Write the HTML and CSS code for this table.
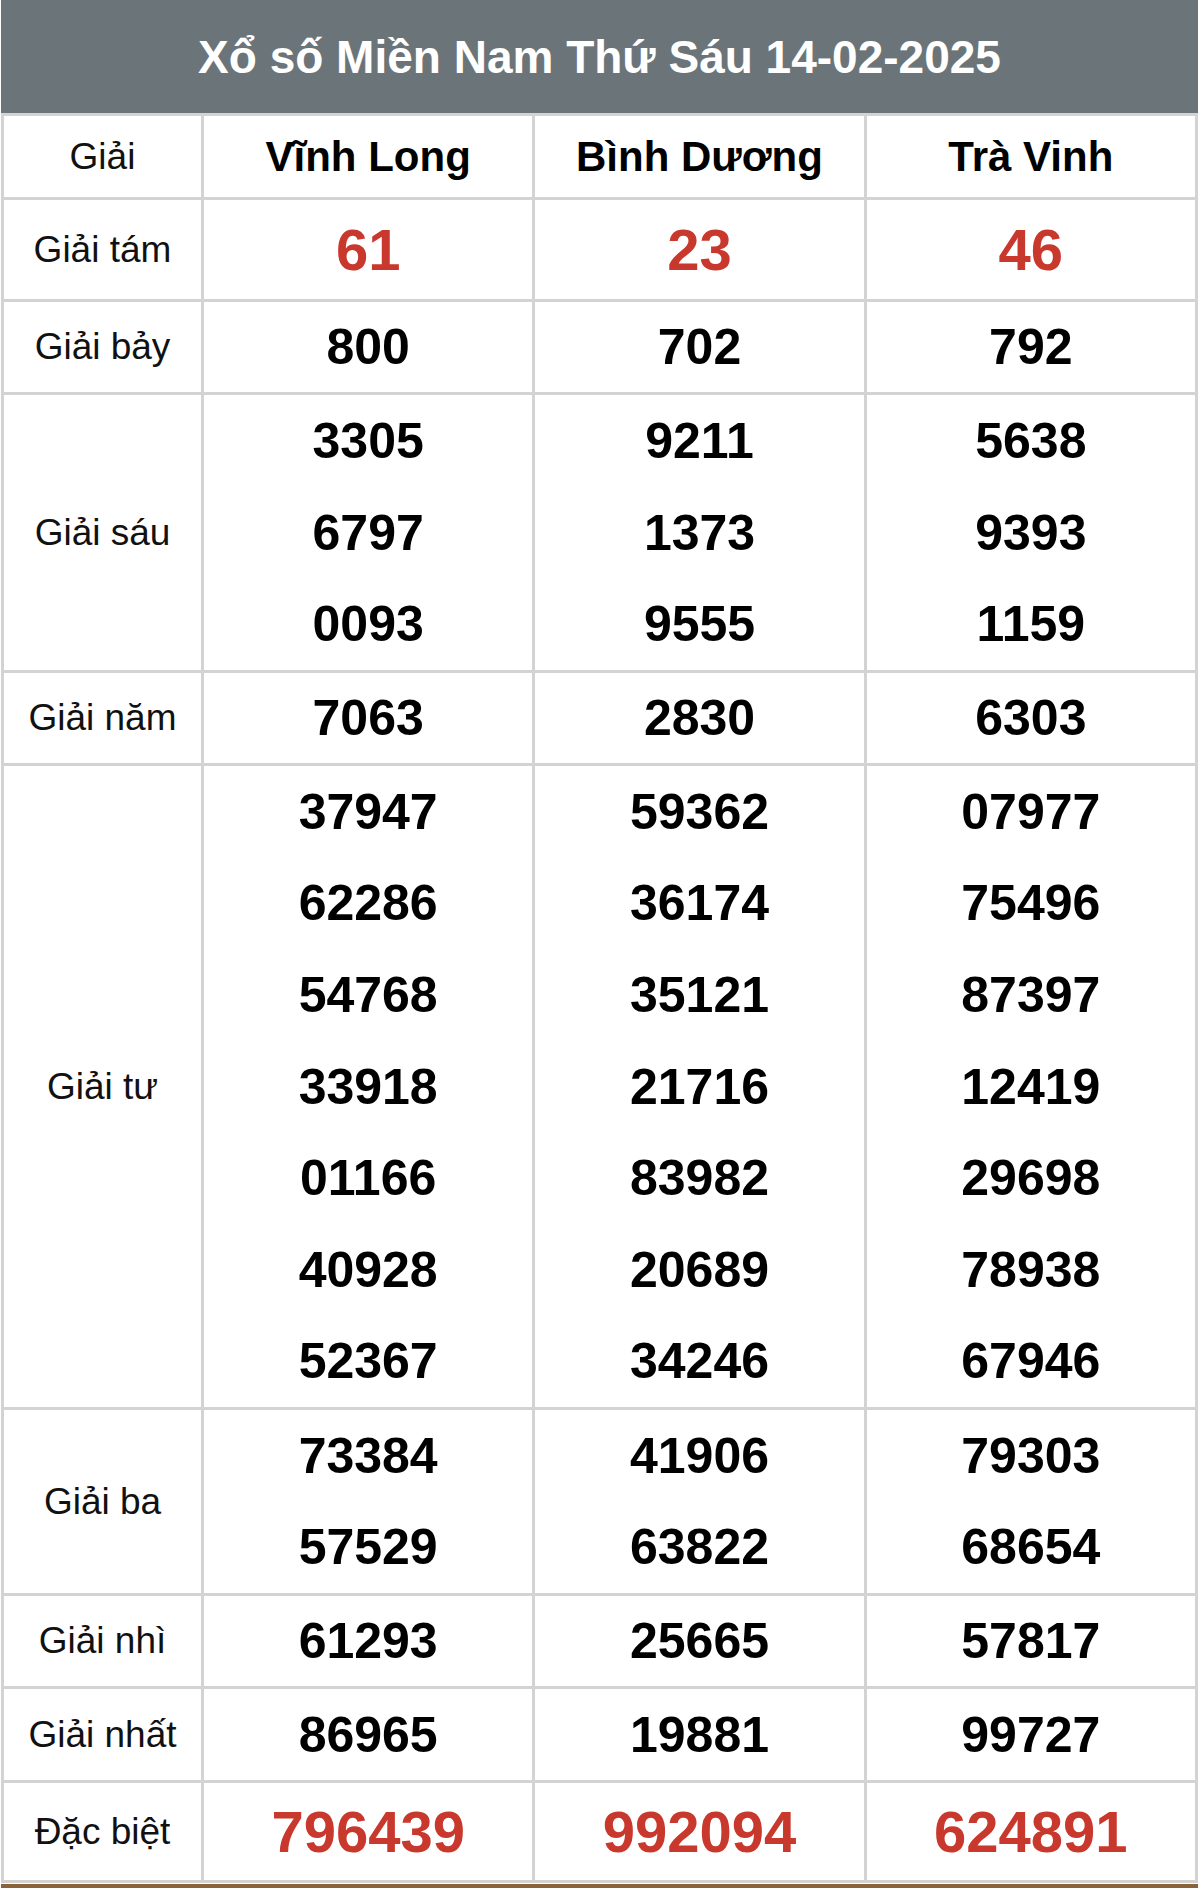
FILE: index.html
```html
<!DOCTYPE html>
<html lang="vi">
<head>
<meta charset="utf-8">
<title>Xổ số Miền Nam Thứ Sáu 14-02-2025</title>
<link rel="stylesheet" href="styles.css">
</head>
<body>
<div class="page">
  <div class="title">Xổ số Miền Nam Thứ Sáu 14-02-2025</div>
  <div class="table">
    <div class="cell label">Giải</div>
    <div class="cell prov">Vĩnh Long</div>
    <div class="cell prov">Bình Dương</div>
    <div class="cell prov">Trà Vinh</div>

    <div class="cell label">Giải tám</div>
    <div class="cell"><div class="num red">61</div></div>
    <div class="cell"><div class="num red">23</div></div>
    <div class="cell"><div class="num red">46</div></div>

    <div class="cell label">Giải bảy</div>
    <div class="cell"><div class="num">800</div></div>
    <div class="cell"><div class="num">702</div></div>
    <div class="cell"><div class="num">792</div></div>

    <div class="cell label">Giải sáu</div>
    <div class="cell"><div class="num">3305</div><div class="num">6797</div><div class="num">0093</div></div>
    <div class="cell"><div class="num">9211</div><div class="num">1373</div><div class="num">9555</div></div>
    <div class="cell"><div class="num">5638</div><div class="num">9393</div><div class="num">1159</div></div>

    <div class="cell label">Giải năm</div>
    <div class="cell"><div class="num">7063</div></div>
    <div class="cell"><div class="num">2830</div></div>
    <div class="cell"><div class="num">6303</div></div>

    <div class="cell label">Giải tư</div>
    <div class="cell">
      <div class="num">37947</div><div class="num">62286</div><div class="num">54768</div><div class="num">33918</div><div class="num">01166</div><div class="num">40928</div><div class="num">52367</div>
    </div>
    <div class="cell">
      <div class="num">59362</div><div class="num">36174</div><div class="num">35121</div><div class="num">21716</div><div class="num">83982</div><div class="num">20689</div><div class="num">34246</div>
    </div>
    <div class="cell">
      <div class="num">07977</div><div class="num">75496</div><div class="num">87397</div><div class="num">12419</div><div class="num">29698</div><div class="num">78938</div><div class="num">67946</div>
    </div>

    <div class="cell label">Giải ba</div>
    <div class="cell"><div class="num">73384</div><div class="num">57529</div></div>
    <div class="cell"><div class="num">41906</div><div class="num">63822</div></div>
    <div class="cell"><div class="num">79303</div><div class="num">68654</div></div>

    <div class="cell label">Giải nhì</div>
    <div class="cell"><div class="num">61293</div></div>
    <div class="cell"><div class="num">25665</div></div>
    <div class="cell"><div class="num">57817</div></div>

    <div class="cell label">Giải nhất</div>
    <div class="cell"><div class="num">86965</div></div>
    <div class="cell"><div class="num">19881</div></div>
    <div class="cell"><div class="num">99727</div></div>

    <div class="cell label">Đặc biệt</div>
    <div class="cell"><div class="num red">796439</div></div>
    <div class="cell"><div class="num red">992094</div></div>
    <div class="cell"><div class="num red">624891</div></div>
  </div>
  <div class="bottom-bar"></div>
</div>
</body>
</html>
```

FILE: styles.css
```css
html, body {
  margin: 0;
  padding: 0;
  background: #ffffff;
}

body {
  font-family: "Liberation Sans", Arial, Helvetica, sans-serif;
  color: #111111;
}

.page {
  width: 1197px;
  margin-left: 1px;
}

.title {
  height: 113px;
  background: #6b7579;
  color: #ffffff;
  font-weight: bold;
  font-size: 46px;
  display: flex;
  align-items: center;
  justify-content: center;
}

.table {
  display: grid;
  grid-template-columns: 197px 1fr 1fr 1fr;
  grid-template-rows: 81px 99px 90px 275px 90px 641px 183px 90px 91px 97px;
  gap: 3px;
  padding: 3px;
  background: #d3d3d3;
}

.cell {
  background: #ffffff;
  display: flex;
  flex-direction: column;
  align-items: center;
  justify-content: center;
}

.label {
  font-size: 37px;
  color: #111111;
}

.prov {
  font-size: 42px;
  font-weight: bold;
  color: #000000;
}

.num {
  flex: 1;
  display: flex;
  align-items: center;
  justify-content: center;
  font-size: 50px;
  font-weight: bold;
  color: #000000;
}

.num.red {
  font-size: 58px;
  color: #c9382c;
}

.bottom-bar {
  height: 4px;
  margin-top: 1px;
  background: #8c6239;
}
```
